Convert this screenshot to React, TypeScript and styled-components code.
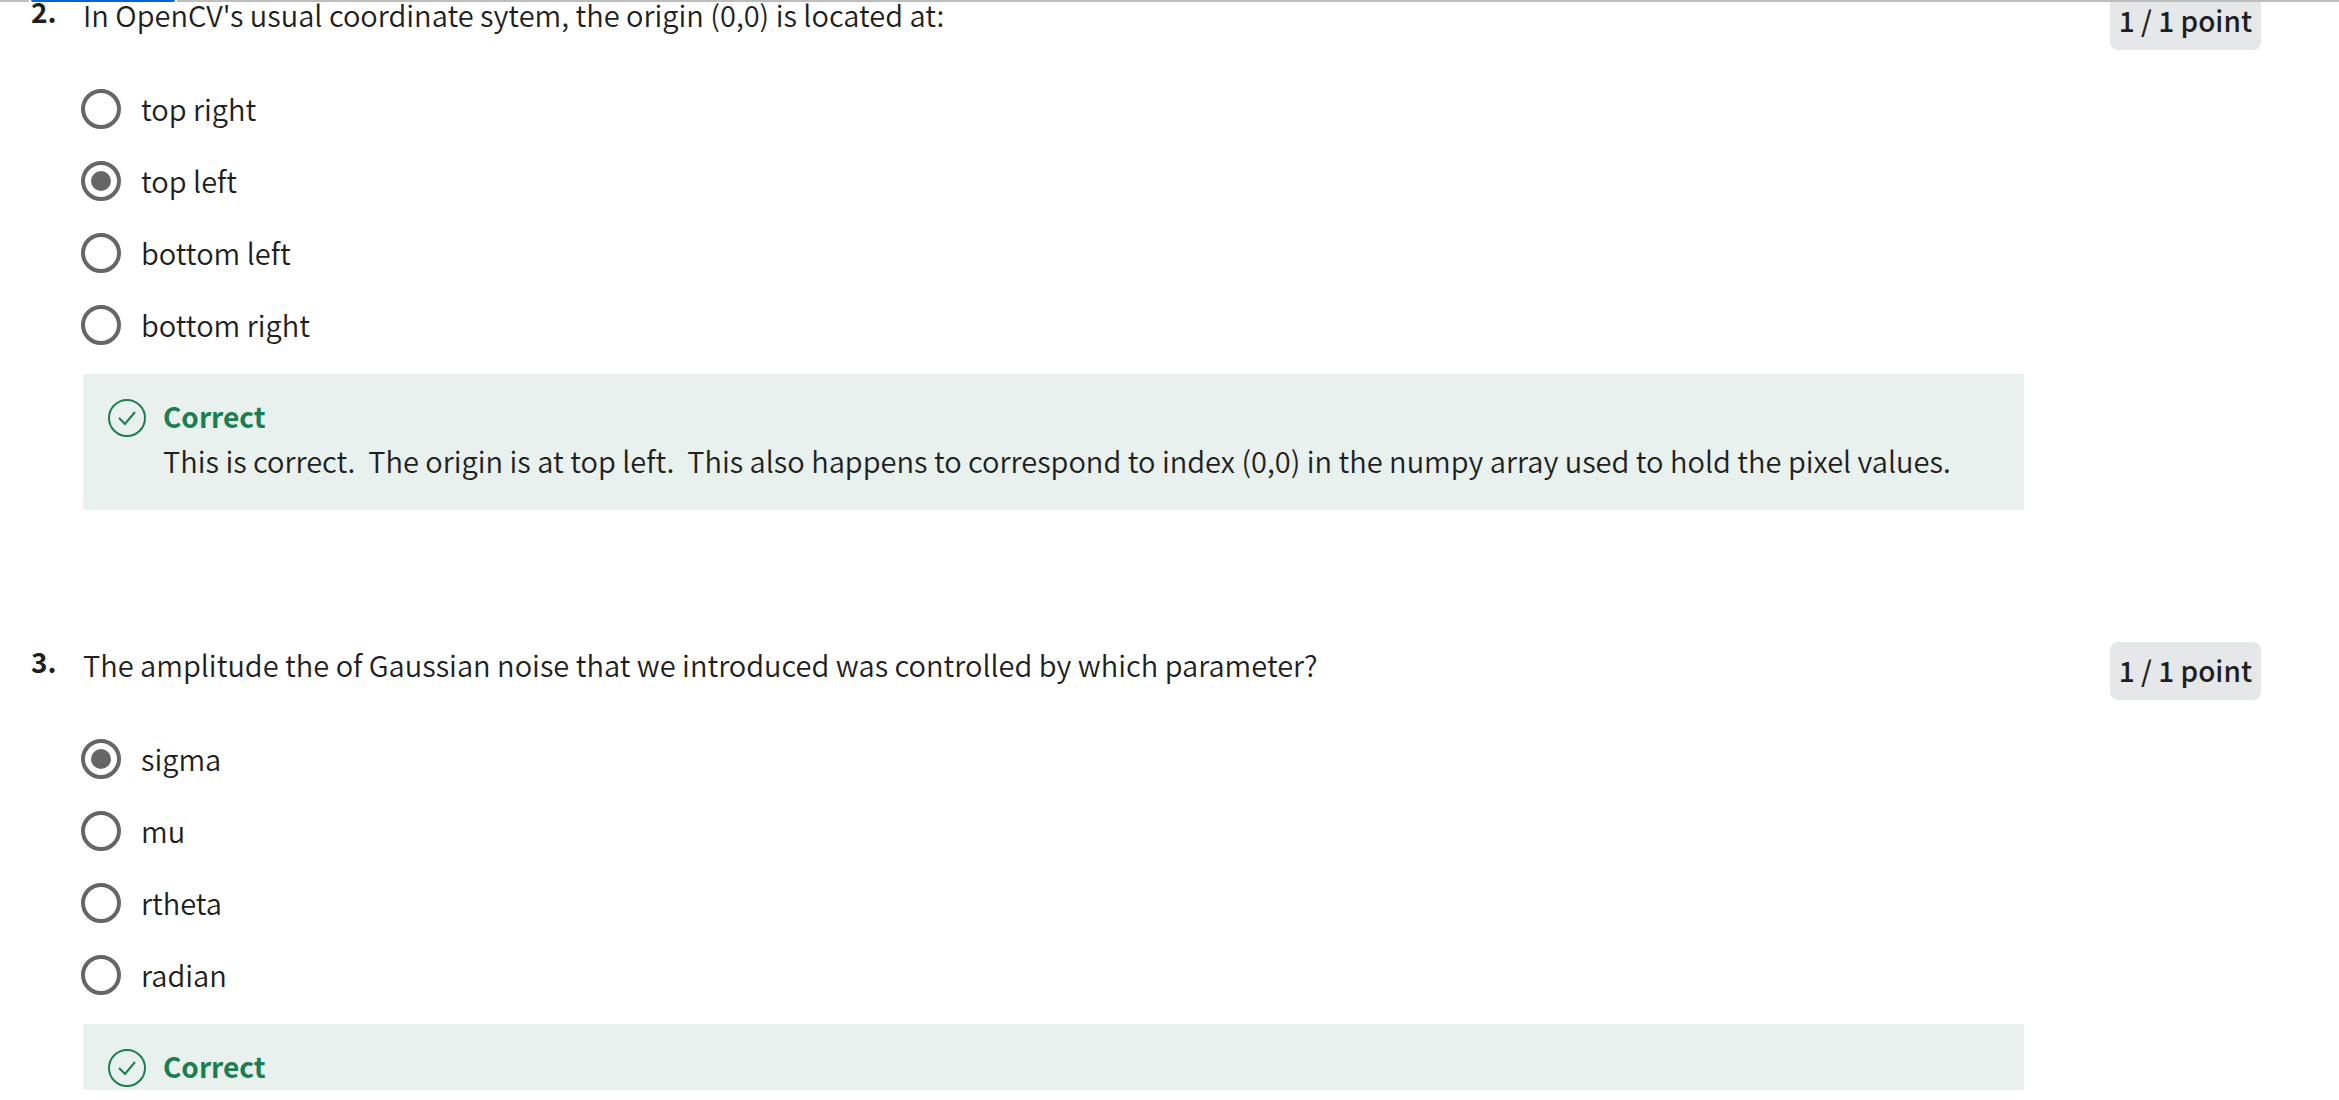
import { useId, useState } from "react";
import styled, { createGlobalStyle } from "styled-components";

const GlobalStyle = createGlobalStyle`
  * {
    box-sizing: border-box;
  }

  body {
    margin: 0;
    background: #fff;
    color: #1f1f1f;
    font-family: "Noto Sans CJK SC", "Noto Sans CJK JP", "Open Sans", sans-serif;
    font-size: 29px;
    font-weight: 350;
    line-height: 44px;
  }
`;

const Page = styled.div`
  display: flex;
  flex-direction: column;
  height: calc(100vh - 10px);
  overflow: hidden;
`;

const ProgressTrack = styled.div`
  flex: none;
  height: 2px;
  padding-left: 31px;
  background: #bdbdbd;
`;

const ProgressFill = styled.div`
  width: 144px;
  height: 2px;
  background: #0062dd;
  border-radius: 0 0 4px 4px;
  box-shadow: 0 0 0 2px #fff;
`;

const Viewport = styled.main`
  flex: 1;
  min-height: 0;
  overflow: hidden;
`;

const QuestionList = styled.div`
  display: flex;
  flex-direction: column;
  gap: 132px;
  margin-top: -10px;
  padding: 0 78px 0 31px;
`;

const QuestionRow = styled.section`
  display: grid;
  grid-template-columns: 52px minmax(0, 1fr) auto;
  align-items: start;
`;

const QuestionNumber = styled.div`
  font-size: 28px;
  font-weight: 700;
  line-height: 38px;
`;

const Prompt = styled.p`
  margin: 0;
`;

const Points = styled.div`
  margin-left: 86px;
  padding: 6px 9px 8px;
  border-radius: 8px;
  background: #e5e7e8;
  font-size: 28px;
  font-weight: 500;
  white-space: nowrap;
`;

const Options = styled.div`
  display: flex;
  flex-direction: column;
  gap: 32px;
  margin: 53px 0 29px -2px;
`;

const Option = styled.label`
  display: flex;
  align-items: center;
  align-self: flex-start;
  gap: 20px;
  height: 40px;
  line-height: 40px;
  cursor: pointer;
`;

const OptionText = styled.span`
  padding-bottom: 2px;
`;

const Radio = styled.input`
  appearance: none;
  display: grid;
  place-content: center;
  flex: none;
  width: 40px;
  height: 40px;
  margin: 0;
  border: 4px solid #666;
  border-radius: 50%;
  background: #fff;
  cursor: pointer;

  &:checked::before {
    content: "";
    width: 20px;
    height: 20px;
    border-radius: 50%;
    background: #666;
  }
`;

const Feedback = styled.div`
  display: flex;
  gap: 17px;
  padding: 20px 25px 28px;
  background: #e8f1ed;
`;

const CheckIcon = styled.svg`
  flex: none;
  width: 38px;
  height: 38px;
  margin-top: 5px;
  fill: none;
  stroke: #1d7c50;
  stroke-width: 2;
`;

const Verdict = styled.div`
  color: #1d7c50;
  font-size: 28px;
  font-weight: 700;
`;

const Explanation = styled.p`
  margin: 0;
  white-space: pre-wrap;
`;

type QuestionData = {
  number: number;
  prompt: string;
  options: string[];
  answer: string;
  explanation: string;
};

const questions: QuestionData[] = [
  {
    number: 2,
    prompt: "In OpenCV's usual coordinate sytem, the origin (0,0) is located at:",
    options: ["top right", "top left", "bottom left", "bottom right"],
    answer: "top left",
    explanation:
      "This is correct.  The origin is at top left.  This also happens to correspond to index (0,0) in the numpy array used to hold the pixel values.",
  },
  {
    number: 3,
    prompt: "The amplitude the of Gaussian noise that we introduced was controlled by which parameter?",
    options: ["sigma", "mu", "rtheta", "radian"],
    answer: "sigma",
    explanation: "",
  },
];

function Question({ number, prompt, options, answer, explanation }: QuestionData) {
  const id = useId();
  const [selected, setSelected] = useState(answer);

  return (
    <QuestionRow>
      <QuestionNumber>{number}.</QuestionNumber>
      <div>
        <Prompt id={id}>{prompt}</Prompt>
        <Options role="radiogroup" aria-labelledby={id}>
          {options.map((option) => (
            <Option key={option}>
              <Radio
                type="radio"
                name={`question-${number}`}
                value={option}
                checked={selected === option}
                onChange={() => setSelected(option)}
              />
              <OptionText>{option}</OptionText>
            </Option>
          ))}
        </Options>
        <Feedback>
          <CheckIcon viewBox="0 0 38 38" aria-hidden="true">
            <circle cx="19" cy="19" r="18" />
            <path d="M11 19l6 6 10-12" />
          </CheckIcon>
          <div>
            <Verdict>Correct</Verdict>
            {explanation && <Explanation>{explanation}</Explanation>}
          </div>
        </Feedback>
      </div>
      <Points>1 / 1 point</Points>
    </QuestionRow>
  );
}

export default function App() {
  return (
    <>
      <GlobalStyle />
      <Page>
        <ProgressTrack>
          <ProgressFill />
        </ProgressTrack>
        <Viewport>
          <QuestionList>
            {questions.map((question) => (
              <Question key={question.number} {...question} />
            ))}
          </QuestionList>
        </Viewport>
      </Page>
    </>
  );
}
